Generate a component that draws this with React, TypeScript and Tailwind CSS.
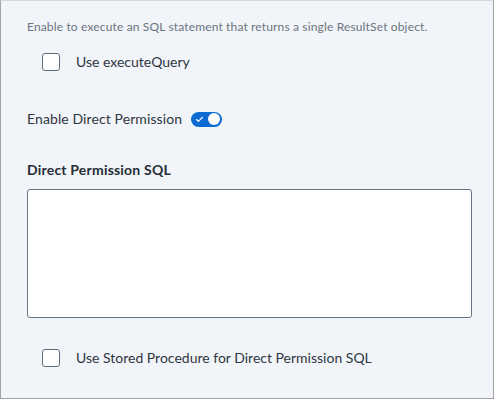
import { Check } from 'lucide-react';

function Checkbox() {
  return <span className="w-[18px] h-[18px] rounded-[3px] border-[1.5px] border-[#5f6b7a] bg-white shrink-0" />;
}

export default function App() {
  return (
    <div
      className="w-[494px] h-[399px] bg-[#f1f4f8] border border-[#a3a3a3] border-t-[#d4d8dd] px-[26px] pt-[17px] text-[#2f3742]"
      style={{ fontFamily: 'Lato, "Open Sans", sans-serif' }}
    >
      {/* Description */}
      <p className="text-[12px] leading-[18px] text-[#6b7480] tracking-[0.15px]">
        Enable to execute an SQL statement that returns a single ResultSet object.
      </p>
      <label className="flex items-center gap-[16px] pl-[15px] mt-[17px]">
        <Checkbox />
        <span className="text-[14px] leading-[18px]">Use executeQuery</span>
      </label>

      {/* Toggle */}
      <div className="flex items-center gap-[9px] mt-[39px]">
        <span className="text-[14px] leading-[18px] tracking-[0.1px]">Enable Direct Permission</span>
        <span className="w-[31px] h-[15px] rounded-full bg-[#0b6bd3] flex items-center justify-between pl-[4px] pr-[2px]">
          <Check className="w-[9px] h-[9px] text-white" strokeWidth={3} />
          <span className="w-[12px] h-[12px] rounded-full bg-white" />
        </span>
      </div>

      {/* SQL */}
      <div className="mt-[33px] text-[14px] leading-[18px] font-bold text-[#262d36] tracking-[0.2px]">Direct Permission SQL</div>
      <textarea className="block mt-[10px] w-[445px] h-[129px] bg-white border border-[#687383] rounded-[3px] resize-none outline-none" />

      <label className="flex items-center gap-[16px] pl-[15px] mt-[31px]">
        <Checkbox />
        <span className="text-[14px] leading-[18px]">Use Stored Procedure for Direct Permission SQL</span>
      </label>
    </div>
  );
}
